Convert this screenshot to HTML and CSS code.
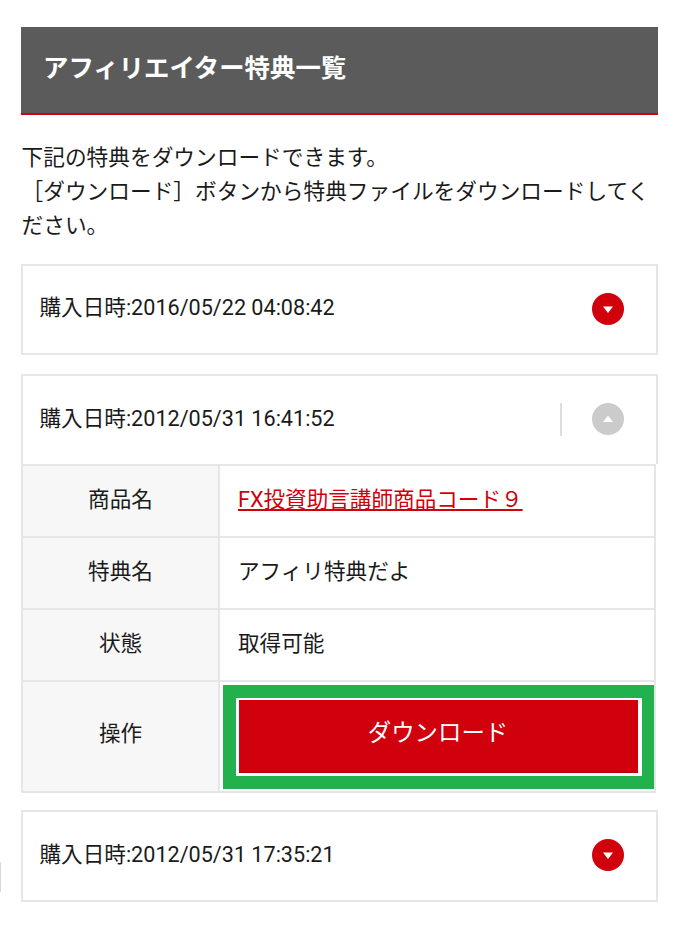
FILE: index.html
```html
<!DOCTYPE html>
<html lang="ja">
<head>
<meta charset="utf-8">
<title>アフィリエイター特典一覧</title>
<link rel="stylesheet" href="styles.css">
</head>
<body>
<span class="edge-mark"></span>
<main class="page">
  <h1 class="title">アフィリエイター特典一覧</h1>
  <p class="intro">下記の特典をダウンロードできます。<br>［ダウンロード］ボタンから特典ファイルをダウンロードしてください。</p>

  <section class="card">
    <div class="card-head">
      <span class="date">購入日時:2016/05/22 04:08:42</span>
      <span class="toggle"><svg class="icon" viewBox="0 0 32 32"><circle cx="16" cy="16" r="16" fill="#d0000d"/><path d="M11 13.5h10L16 20z" fill="#fff"/></svg></span>
    </div>
  </section>

  <section class="card open">
    <div class="card-head">
      <span class="date">購入日時:2012/05/31 16:41:52</span>
      <span class="toggle divided"><svg class="icon" viewBox="0 0 32 32"><circle cx="16" cy="16" r="16" fill="#cbcbcb"/><path d="M11 19h10L16 12.500z" fill="#fff"/></svg></span>
    </div>
    <table class="detail">
      <tr><th>商品名</th><td><a href="#">FX投資助言講師商品コード９</a></td></tr>
      <tr><th>特典名</th><td>アフィリ特典だよ</td></tr>
      <tr><th>状態</th><td>取得可能</td></tr>
      <tr class="action"><th>操作</th><td><div class="highlight"><button class="download" type="button">ダウンロード</button></div></td></tr>
    </table>
  </section>

  <section class="card">
    <div class="card-head">
      <span class="date">購入日時:2012/05/31 17:35:21</span>
      <span class="toggle"><svg class="icon" viewBox="0 0 32 32"><circle cx="16" cy="16" r="16" fill="#d0000d"/><path d="M11 13.500h10L16 20z" fill="#fff"/></svg></span>
    </div>
  </section>
</main>
</body>
</html>
```
FILE: styles.css
```css
* { box-sizing: border-box; }
html, body { margin: 0; padding: 0; background: #fff; }
body {
  font-family: "Roboto", "Noto Sans CJK JP", sans-serif;
  color: #1a1a1a;
  font-size: 21.6px;
  height: 931px;
  overflow: hidden;
  position: relative;
}
.page { padding: 27px 22px 0 21px; }
.title {
  margin: 0;
  height: 88px;
  padding: 0 22px;
  background: #5b5b5b;
  border-bottom: 2px solid #d0000d;
  color: #fff;
  font-size: 25.4px;
  font-weight: 700;
  line-height: 82px;
}
.intro {
  margin: 24px 0 0;
  padding-left: 0.5px;
  line-height: 34px;
  height: 106px;
  font-family: "Noto Sans CJK JP", sans-serif;
  font-size: 21.7px;
}
.card {
  margin: 19px 0 0;
  border: 2px solid #e6e6e6;
}
.card-head {
  height: 87px;
  display: flex;
  align-items: center;
  justify-content: space-between;
  padding: 0 32px 0 16.5px;
}
.date { position: relative; top: -4px; }
.toggle { display: flex; align-items: center; position: relative; top: -1px; }
.divided::before {
  content: "";
  position: absolute;
  left: -32px;
  top: 0;
  width: 2px;
  height: 33px;
  background: #dcdcdc;
}
.icon { display: block; width: 32px; height: 32px; }
.card.open { border: 0; }
.card.open .card-head {
  height: 90px;
  border: 2px solid #e6e6e6;
  border-bottom: 0;
  padding-right: 32px;
}
.detail {
  border-collapse: collapse;
  width: 635px;
  table-layout: fixed;
}
.detail th, .detail td {
  border: 2px solid #e6e6e6;
  height: 72px;
  padding: 0 0 8px;
  font-weight: 400;
}
.detail th { width: 197px; background: #f7f7f7; text-align: center; }
.detail td { padding-left: 18px; }
.detail a { color: #d0000d; text-decoration: underline; }
.action th, .action td { height: 111px; }
.detail .action th { padding-bottom: 10px; }
.detail .action td { padding: 3px 0 0 3px; vertical-align: top; }
.highlight {
  background: #22b14c;
  width: 432px;
  height: 104px;
  padding: 13px 13px 14px;
}
.download {
  display: block;
  width: 406px;
  height: 78px;
  border: solid #fff;
  border-width: 2px 4px 3px 3px;
  background: #d0000d;
  box-shadow: inset 0 -1px 0 #b8000b;
  color: #fff;
  font: 400 23.4px "Roboto", "Noto Sans CJK JP", sans-serif;
  padding: 0 1px 11px 0;
}
.open + .card { margin-top: 17px; }
.open + .card .card-head { height: 88px; }
.edge-mark {
  position: absolute;
  left: 0;
  top: 862px;
  width: 1px;
  height: 30px;
  background: #d8d8d8;
}
```
